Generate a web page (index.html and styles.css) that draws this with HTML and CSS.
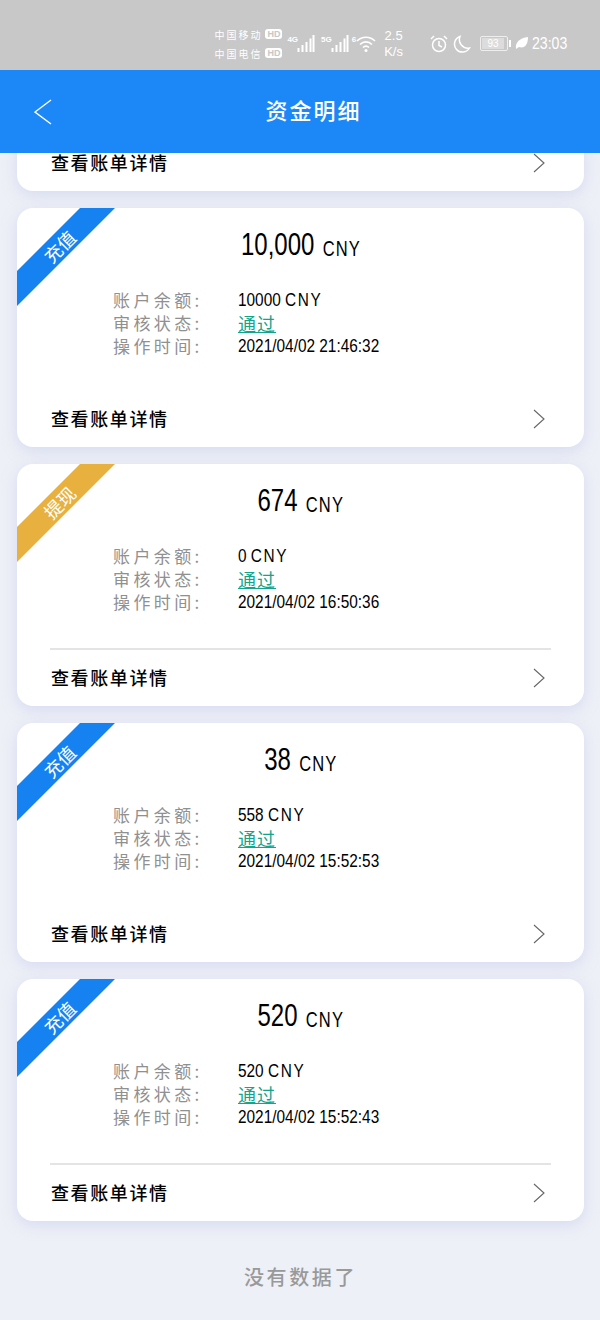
FILE: index.html
```html
<!DOCTYPE html>
<html lang="zh-CN">
<head>
  <meta charset="UTF-8" />
  <meta name="viewport" content="width=device-width, initial-scale=1.0" />
  <title>资金明细</title>
  <link rel="stylesheet" href="styles.css">
</head>
<body>
  <div class="status-bar">
    <div class="carriers">
      <div class="carrier">中国移动<span class="hd">HD</span></div>
      <div class="carrier">中国电信<span class="hd">HD</span></div>
    </div>
    <div class="signal">
      <span class="net">4G</span>
      <svg width="18" height="17" viewBox="0 0 18 17"><path d="M1.500 13v4M5.500 10v7M9.500 7v10M13.500 3.500V17M16.500 0v17" stroke="#fff" stroke-width="2" fill="none"/></svg>
    </div>
    <div class="signal">
      <span class="net">5G</span>
      <svg width="18" height="17" viewBox="0 0 18 17"><path d="M1.500 13v4M5.500 10v7M9.500 7v10M13.500 3.500V17M16.500 0v17" stroke="#fff" stroke-width="2" fill="none"/></svg>
    </div>
    <div class="signal wifi">
      <span class="net">6</span>
      <svg width="20" height="17" viewBox="0 0 20 17"><path d="M1 6c5-5 13-5 18 0M4 9.500c3.500-3.500 8.500-3.500 12 0M7 12.500c2-1.800 4-1.800 6 0" stroke="#fff" stroke-width="1.600" fill="none"/><circle cx="10" cy="15.500" r="1.500" fill="#fff"/></svg>
    </div>
    <div class="speed">2.5<br>K/s</div>
    <svg class="alarm" width="18" height="18" viewBox="0 0 18 18"><circle cx="9" cy="10" r="6.500" stroke="#fff" stroke-width="1.500" fill="none"/><path d="M9 6v4.500l3 1.500M1 4l3-3M17 4l-3-3" stroke="#fff" stroke-width="1.500" fill="none"/></svg>
    <svg class="moon" width="18" height="18" viewBox="0 0 18 18"><path d="M7 1.500a8 8 0 1 0 9.500 11.500A8.500 8.500 0 0 1 7 1.500z" stroke="#fff" stroke-width="1.500" fill="none"/></svg>
    <div class="battery"><span class="battery-level">93</span></div>
    <svg class="leaf" width="13" height="13" viewBox="0 0 13 13"><path d="M1 12C0 5 5 1 13 0c0 7-3 12-9 10z" fill="#fff"/></svg>
    <div class="clock">23:03</div>
  </div>

  <header class="top-bar">
    <svg class="back" width="18" height="26" viewBox="0 0 18 26"><path d="M17 1L1 13l16 12" stroke="#fff" stroke-width="1.400" fill="none"/></svg>
    <h1>资金明细</h1>
  </header>

  <main class="list">
    <section class="card card-cut">
      <a class="detail-link">查看账单详情
        <svg width="12" height="20" viewBox="0 0 12 20"><path d="M1 1l10 9-10 9" stroke="#666" stroke-width="1.100" fill="none"/></svg>
      </a>
    </section>

    <section class="card">
      <div class="ribbon"><span>充值</span></div>
      <div class="amount"><div class="amount-inner"><b>10,000</b> <span class="cur">CNY</span></div></div>
      <div class="rows">
        <span class="label">账户余额:</span><span class="val">10000 <span class="cur">CNY</span></span>
        <span class="label">审核状态:</span><span class="ok">通过</span>
        <span class="label">操作时间:</span><span class="val">2021/04/02 21:46:32</span>
      </div>
      <a class="detail-link">查看账单详情
        <svg width="12" height="20" viewBox="0 0 12 20"><path d="M1 1l10 9-10 9" stroke="#666" stroke-width="1.100" fill="none"/></svg>
      </a>
    </section>

    <section class="card">
      <div class="ribbon ribbon-gold"><span>提现</span></div>
      <div class="amount"><div class="amount-inner"><b>674</b> <span class="cur">CNY</span></div></div>
      <div class="rows">
        <span class="label">账户余额:</span><span class="val">0 <span class="cur">CNY</span></span>
        <span class="label">审核状态:</span><span class="ok">通过</span>
        <span class="label">操作时间:</span><span class="val">2021/04/02 16:50:36</span>
      </div>
      <hr class="line">
      <a class="detail-link">查看账单详情
        <svg width="12" height="20" viewBox="0 0 12 20"><path d="M1 1l10 9-10 9" stroke="#666" stroke-width="1.100" fill="none"/></svg>
      </a>
    </section>

    <section class="card">
      <div class="ribbon"><span>充值</span></div>
      <div class="amount"><div class="amount-inner"><b>38</b> <span class="cur">CNY</span></div></div>
      <div class="rows">
        <span class="label">账户余额:</span><span class="val">558 <span class="cur">CNY</span></span>
        <span class="label">审核状态:</span><span class="ok">通过</span>
        <span class="label">操作时间:</span><span class="val">2021/04/02 15:52:53</span>
      </div>
      <a class="detail-link">查看账单详情
        <svg width="12" height="20" viewBox="0 0 12 20"><path d="M1 1l10 9-10 9" stroke="#666" stroke-width="1.100" fill="none"/></svg>
      </a>
    </section>

    <section class="card">
      <div class="ribbon"><span>充值</span></div>
      <div class="amount"><div class="amount-inner"><b>520</b> <span class="cur">CNY</span></div></div>
      <div class="rows">
        <span class="label">账户余额:</span><span class="val">520 <span class="cur">CNY</span></span>
        <span class="label">审核状态:</span><span class="ok">通过</span>
        <span class="label">操作时间:</span><span class="val">2021/04/02 15:52:43</span>
      </div>
      <hr class="line">
      <a class="detail-link">查看账单详情
        <svg width="12" height="20" viewBox="0 0 12 20"><path d="M1 1l10 9-10 9" stroke="#666" stroke-width="1.100" fill="none"/></svg>
      </a>
    </section>

    <p class="no-more">没有数据了</p>
  </main>
</body>
</html>
```

FILE: styles.css
```css
* {
  box-sizing: border-box;
}
html, body {
  margin: 0;
  height: 1320px;
  overflow: hidden;
}
body {
  font-family: "Liberation Sans", "Noto Sans CJK SC", sans-serif;
  background-color: #eef0f7;
  color: #000;
}

/* status bar */
.status-bar {
  height: 70px;
  background: #c8c8c8;
  display: flex;
  align-items: center;
  justify-content: flex-end;
  padding: 17px 33px 0 0;
  color: #fff;
}
.carriers {
  font-family: "Noto Sans CJK SC", sans-serif;
  font-size: 10px;
  letter-spacing: 2px;
  line-height: 19px;
  margin-right: 5px;
}
.carrier {
  display: flex;
  align-items: center;
}
.hd {
  font-family: "Liberation Sans", sans-serif;
  font-size: 9px;
  font-weight: bold;
  letter-spacing: 0;
  color: #c8c8c8;
  background: #fff;
  border-radius: 3px;
  line-height: 10px;
  padding: 0 2px;
  margin-left: 3px;
}
.signal {
  display: flex;
  align-items: flex-end;
  margin-right: 6px;
}
.net {
  font-family: "Liberation Sans", sans-serif;
  font-size: 8px;
  font-weight: bold;
  align-self: flex-start;
  line-height: 10px;
  margin-right: -1px;
}
.wifi {
  margin: 0 0 0 -3px;
}
.wifi .net {
  margin-right: 0;
}
.speed {
  font-family: "Liberation Sans", sans-serif;
  font-size: 13px;
  line-height: 16px;
  text-align: center;
  margin: 0 27px 0 8px;
}
.moon {
  margin: 0 9px 0 5px;
}
.battery {
  width: 28px;
  height: 15px;
  border: 1px solid #eee;
  border-radius: 2px;
  padding: 1px;
  margin-right: 7px;
  position: relative;
}
.battery::after {
  content: "";
  position: absolute;
  right: -4px;
  top: 3px;
  width: 2px;
  height: 7px;
  background: #fff;
}
.battery-level {
  display: block;
  width: 22px;
  height: 11px;
  background: #dcdcdc;
  font-family: "Liberation Sans", sans-serif;
  font-size: 10px;
  line-height: 11px;
  text-align: center;
}
.leaf {
  margin-right: 4px;
}
.clock {
  width: 35px;
  font-family: "Liberation Sans", sans-serif;
  font-size: 17px;
  white-space: nowrap;
  transform: scaleX(0.83);
  transform-origin: left center;
}

/* header */
.top-bar {
  height: 83px;
  background: #1c88f8;
  display: flex;
  align-items: center;
  justify-content: center;
  padding: 0 0 6px 27px;
  position: relative;
  z-index: 2;
}
.top-bar h1 {
  margin: 0;
  color: #fff;
  font-family: "Noto Sans CJK SC", sans-serif;
  font-size: 22px;
  font-weight: 500;
  letter-spacing: 2px;
}
.back {
  position: absolute;
  left: 34px;
  top: 29px;
}

/* list */
.list {
  padding: 0 16px 0 17px;
}
.card {
  background: #fff;
  border-radius: 16px;
  margin-bottom: 17px;
  position: relative;
  overflow: hidden;
  box-shadow: 0 4px 14px rgba(190, 200, 235, 0.5);
}
.card-cut {
  margin-top: -17px;
}
.ribbon {
  position: absolute;
  left: 0;
  top: 0;
  width: 98px;
  height: 98px;
  background: #1682f2;
  clip-path: polygon(63px 0, 98px 0, 0 98px, 0 63px);
}
.ribbon-gold {
  background: #e8b03e;
}
.ribbon span {
  position: absolute;
  left: 24px;
  top: 26px;
  font-family: "Noto Sans CJK SC", sans-serif;
  font-size: 18px;
  line-height: 24px;
  color: #fff;
  transform: rotate(-45deg);
  white-space: nowrap;
}
.amount {
  height: 58px;
  padding-top: 14px;
  line-height: 44px;
  text-align: center;
  white-space: nowrap;
}
/* the reference face is a condensed one, none is installed */
.amount-inner {
  display: inline-block;
  font-size: 22px;
  transform: scaleX(0.75);
}
.amount b {
  font-size: 32px;
  font-weight: normal;
  margin-right: 5px;
}
.amount .cur {
  letter-spacing: 1.5px;
  position: relative;
  top: 1px;
}
.rows {
  display: grid;
  grid-template-columns: 125px auto;
  grid-auto-rows: 23px;
  align-items: center;
  height: 126px;
  padding: 22px 0 0 96px;
  font-size: 19px;
}
.val {
  white-space: nowrap;
  transform: scaleX(0.81);
  transform-origin: left center;
}
.val .cur {
  letter-spacing: 2px;
}
.label {
  font-family: "Noto Sans CJK SC", sans-serif;
  font-size: 17px;
  letter-spacing: 3.4px;
  color: #909090;
  white-space: nowrap;
}
.ok {
  font-family: "Noto Sans CJK SC", sans-serif;
  font-size: 18px;
  letter-spacing: 1px;
  color: #13a58c;
  text-decoration: underline;
}
.line {
  margin: 0 33px 1px;
  border: 0;
  height: 2px;
  background: #e4e4e4;
}
.detail-link {
  height: 55px;
  padding: 0 39px 4px 34px;
  display: flex;
  align-items: center;
  justify-content: space-between;
  font-family: "Noto Sans CJK SC", sans-serif;
  font-size: 18px;
  font-weight: 500;
  letter-spacing: 1.6px;
}
.detail-link svg {
  margin-top: 2px;
}
.no-more {
  margin: 41px 0 0;
  text-align: center;
  font-family: "Noto Sans CJK SC", sans-serif;
  font-size: 20px;
  font-weight: 500;
  letter-spacing: 2.6px;
  color: #999;
}
```
